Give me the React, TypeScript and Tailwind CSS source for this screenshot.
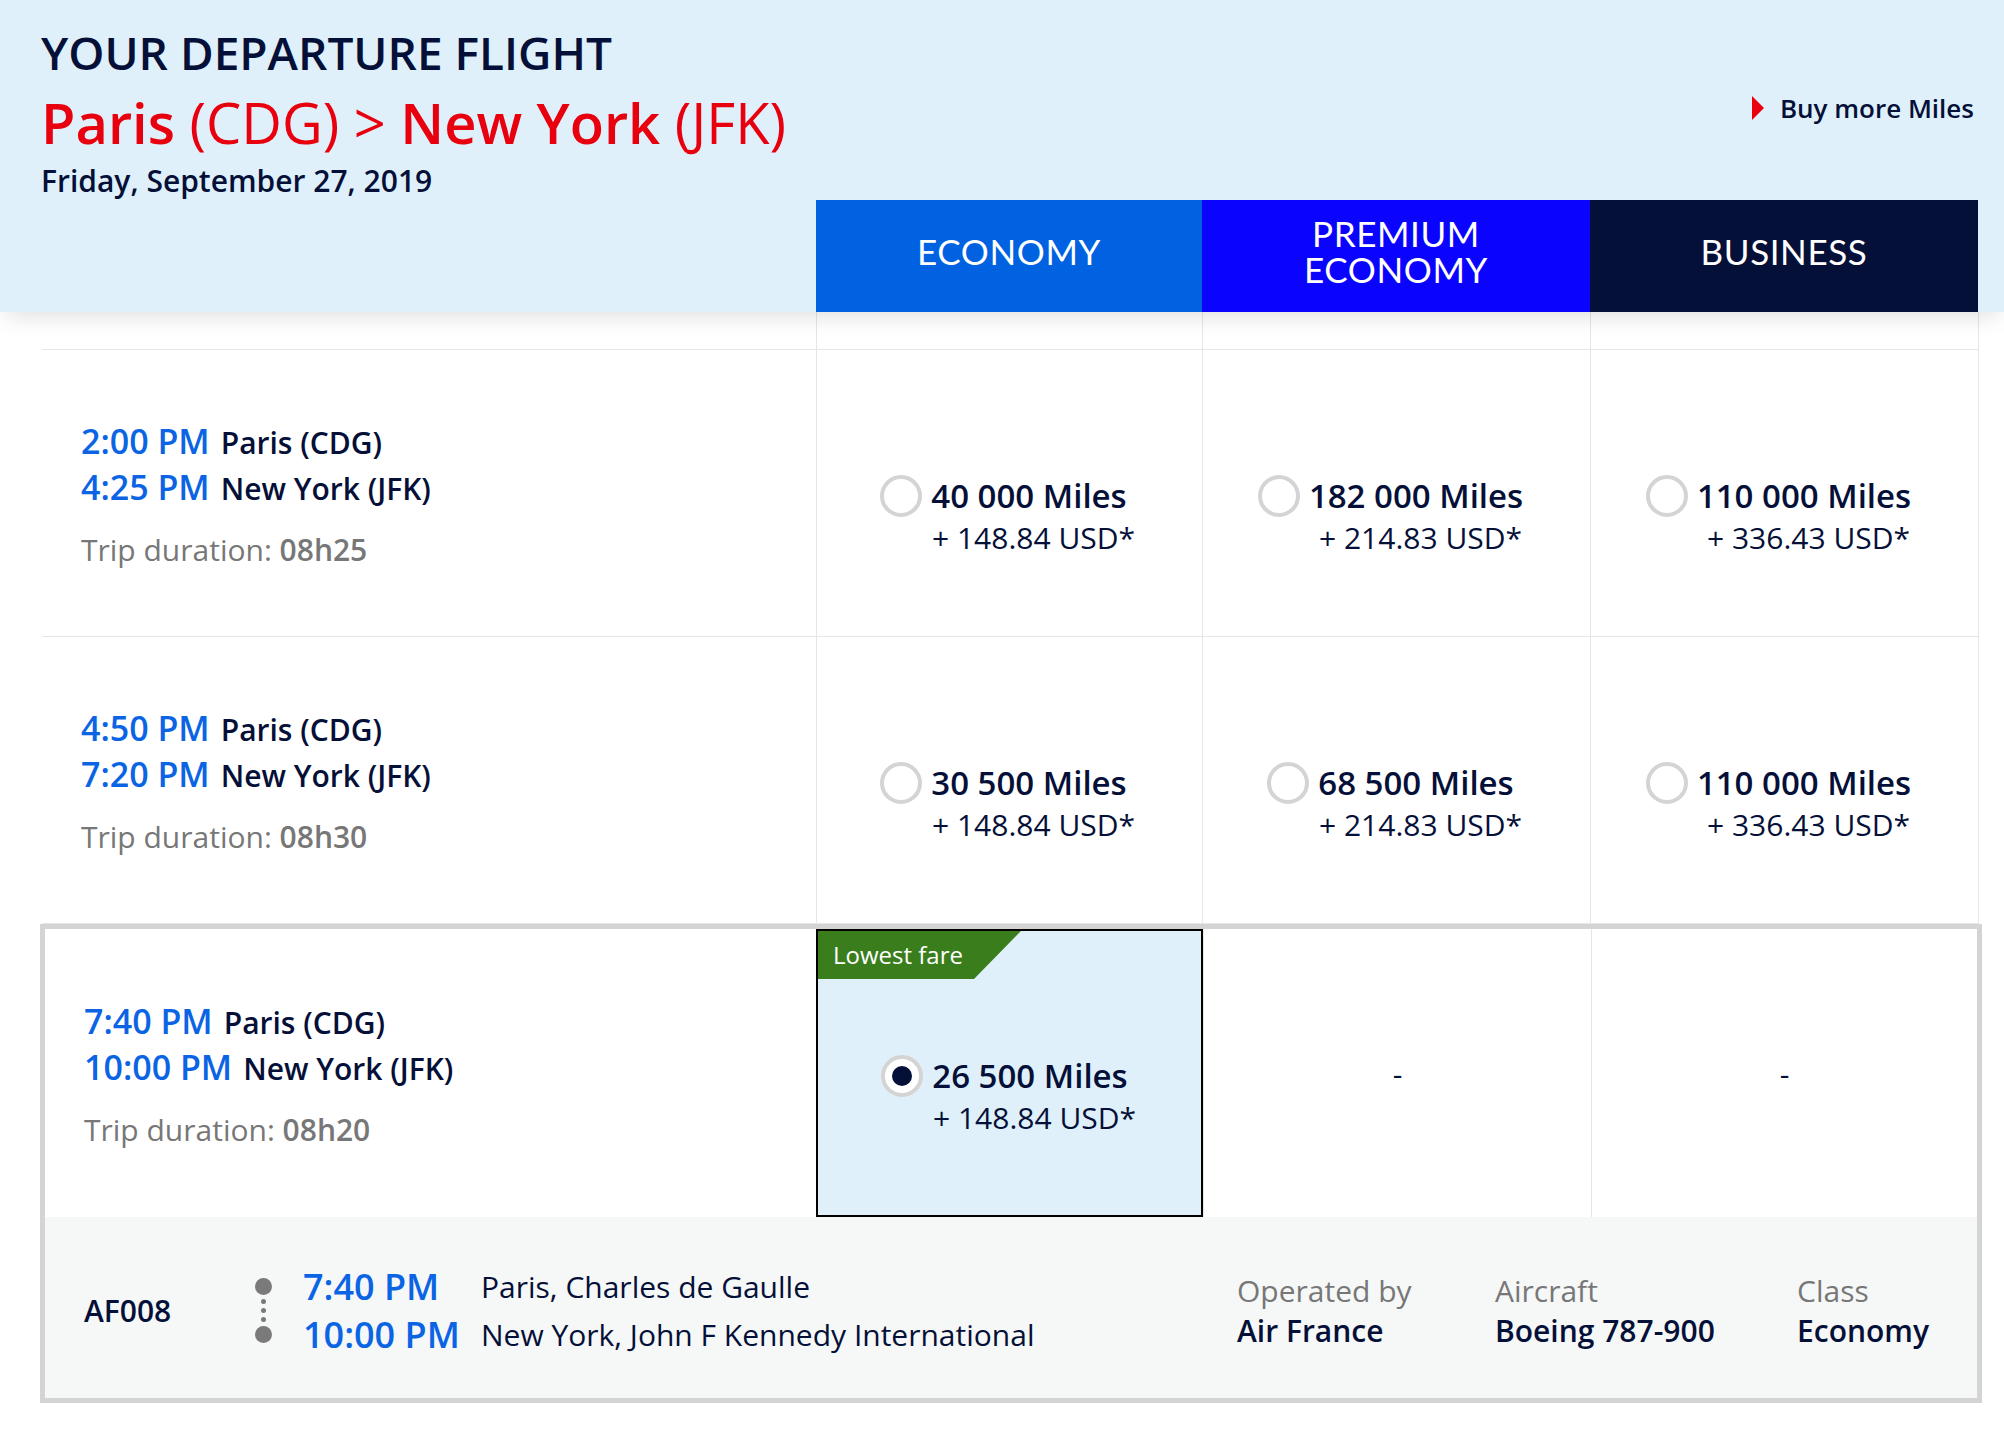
import React from "react";

type Fare = { miles: string; usd: string } | null;

interface Flight {
  dep: string;
  arr: string;
  duration: string;
  fares: Fare[];
  selected?: boolean;
}

const flights: Flight[] = [
  {
    dep: "2:00 PM",
    arr: "4:25 PM",
    duration: "08h25",
    fares: [
      { miles: "40 000 Miles", usd: "+ 148.84 USD*" },
      { miles: "182 000 Miles", usd: "+ 214.83 USD*" },
      { miles: "110 000 Miles", usd: "+ 336.43 USD*" },
    ],
  },
  {
    dep: "4:50 PM",
    arr: "7:20 PM",
    duration: "08h30",
    fares: [
      { miles: "30 500 Miles", usd: "+ 148.84 USD*" },
      { miles: "68 500 Miles", usd: "+ 214.83 USD*" },
      { miles: "110 000 Miles", usd: "+ 336.43 USD*" },
    ],
  },
  {
    dep: "7:40 PM",
    arr: "10:00 PM",
    duration: "08h20",
    fares: [{ miles: "26 500 Miles", usd: "+ 148.84 USD*" }, null, null],
    selected: true,
  },
];

function Radio({ checked }: { checked?: boolean }) {
  return (
    <span className="flex h-[42px] w-[42px] shrink-0 items-center justify-center rounded-full border-[4px] border-[#d4d4d4] bg-white">
      {checked && <span className="h-[20px] w-[20px] rounded-full bg-[#051038]" />}
    </span>
  );
}

function FlightInfo({ f }: { f: Flight }) {
  return (
    <div className="flex items-center pl-[39px] pt-[2px]">
      <div>
        <div className="flex items-baseline leading-[46px]">
          <span className="text-[34px] font-semibold text-[#0a64e4]">{f.dep}</span>
          <span className="ml-[11px] text-[30px] font-semibold leading-[40px]">Paris (CDG)</span>
        </div>
        <div className="flex items-baseline leading-[46px]">
          <span className="text-[34px] font-semibold text-[#0a64e4]">{f.arr}</span>
          <span className="ml-[11px] text-[30px] font-semibold leading-[40px]">New York (JFK)</span>
        </div>
        <div className="mt-[20px] text-[30px] leading-[40px] text-[#777777]">
          Trip duration: <span className="font-semibold">{f.duration}</span>
        </div>
      </div>
    </div>
  );
}

function PriceCell({ fare, selected, className }: { fare: Fare; selected?: boolean; className: string }) {
  if (!fare) {
    return (
      <div className={`flex items-center justify-center border-l border-[#e6e6e6] text-[30px] ${className}`}>-</div>
    );
  }
  return (
    <div
      className={`flex flex-col ${className} ${
        selected ? "border-[2px] border-black bg-[#dff0fa]" : "border-l border-[#e6e6e6]"
      }`}
    >
      <div className="h-[48px] shrink-0">
        {selected && (
          <div className="flex h-[48px] w-[203px] items-center bg-[#3a7d1c] pl-[15px] text-[24px] text-white [clip-path:polygon(0_0,100%_0,calc(100%-47px)_100%,0_100%)]">
            Lowest fare
          </div>
        )}
      </div>
      <div
        className={`flex flex-1 flex-col items-center justify-center pb-[4px] ${
          selected ? "pr-[10px]" : "pr-[12px]"
        }`}
      >
        <div className="flex items-center gap-[9px]">
          <Radio checked={selected} />
          <span className="text-[33px] font-semibold leading-[42px]">{fare.miles}</span>
        </div>
        <div className="mt-[3px] pl-[60px] text-[30px] leading-[36px]">{fare.usd}</div>
      </div>
    </div>
  );
}

export default function App() {
  return (
    <div className="min-h-[1432px] bg-white font-['Open_Sans',sans-serif] text-[#051038]">
      <header className="relative z-10 flex h-[312px] bg-[#dff0fa] pl-[41px] pr-[26px] shadow-[0_10px_22px_-6px_rgba(0,0,0,0.13)]">
        <div className="w-[775px] pt-[25px]">
          <h1 className="text-[46px] font-semibold leading-[54px]">YOUR DEPARTURE FLIGHT</h1>
          <div className="mt-[8px] text-[56px] leading-[70px] text-[#e8000e]">
            <span className="font-semibold">Paris</span> (CDG) &gt; <span className="font-semibold">New York</span> (JFK)
          </div>
          <div className="mt-[6px] text-[30px] font-semibold leading-[36px]">Friday, September 27, 2019</div>
        </div>
        <div className="flex flex-1 flex-col">
          <div className="flex h-[200px] shrink-0 items-start justify-end pr-[4px] pt-[92px]">
            <a href="#" className="flex items-center gap-[16px] text-[26px] font-semibold leading-[32px]">
              <svg width="12" height="24" viewBox="0 0 12 24">
                <path d="M0 0L12 12L0 24Z" fill="#e8000e" />
              </svg>
              Buy more Miles
            </a>
          </div>
          <div className="flex flex-1 font-['Lato',sans-serif] text-[35px] tracking-[0.6px] text-white">
            <div className="flex w-[386px] items-center justify-center bg-[#0062e1] pb-[10px]">ECONOMY</div>
            <div className="flex w-[388px] flex-col items-center justify-center bg-[#0a04ff] pb-[10px] text-center">
              <div className="h-[36px] leading-[36px]">PREMIUM</div>
              <div className="h-[36px] leading-[36px]">ECONOMY</div>
            </div>
            <div className="flex flex-1 items-center justify-center bg-[#051038] pb-[10px]">BUSINESS</div>
          </div>
        </div>
      </header>

      <main className="ml-[42px] w-[1937px]">
        <div className="flex h-[38px] border-b border-[#e6e6e6]">
          <div className="w-[774px]" />
          <div className="w-[386px] border-l border-[#e6e6e6]" />
          <div className="w-[388px] border-l border-[#e6e6e6]" />
          <div className="flex-1 border-x border-[#e6e6e6]" />
        </div>

        {flights
          .filter((f) => !f.selected)
          .map((f) => (
            <div key={f.dep} className="flex h-[287px] border-b border-[#e6e6e6]">
              <div className="flex w-[774px]">
                <FlightInfo f={f} />
              </div>
              <PriceCell fare={f.fares[0]} className="w-[386px]" />
              <PriceCell fare={f.fares[1]} className="w-[388px]" />
              <PriceCell fare={f.fares[2]} className="flex-1 border-r" />
            </div>
          ))}

        {flights
          .filter((f) => f.selected)
          .map((f) => (
            <div key={f.dep} className="-ml-[2px] w-[1942px] border-[5px] border-[#d4d4d4]">
              <div className="flex h-[288px]">
                <div className="flex w-[771px]">
                  <FlightInfo f={f} />
                </div>
                <PriceCell fare={f.fares[0]} selected className="w-[387px]" />
                <PriceCell fare={f.fares[1]} className="w-[388px]" />
                <PriceCell fare={f.fares[2]} className="flex-1" />
              </div>
              <div className="flex h-[181px] items-center bg-[#f6f7f7] pl-[39px] pt-[6px]">
                <div className="flex w-[1153px] items-center">
                  <div className="w-[170px] text-[30px] font-semibold">AF008</div>
                  <div className="flex w-[18px] flex-col items-center gap-[4px]">
                    <span className="h-[17px] w-[17px] rounded-full bg-[#7a7a7a]" />
                    <span className="h-[5px] w-[5px] rounded-full bg-[#7a7a7a]" />
                    <span className="h-[5px] w-[5px] rounded-full bg-[#7a7a7a]" />
                    <span className="h-[5px] w-[5px] rounded-full bg-[#7a7a7a]" />
                    <span className="h-[17px] w-[17px] rounded-full bg-[#7a7a7a]" />
                  </div>
                  <div className="ml-[31px] w-[178px] text-[36px] font-semibold leading-[48px] text-[#0a64e4]">
                    <div>7:40 PM</div>
                    <div>10:00 PM</div>
                  </div>
                  <div className="text-[30px] leading-[48px]">
                    <div>Paris, Charles de Gaulle</div>
                    <div>New York, John F Kennedy International</div>
                  </div>
                </div>
                <div className="flex text-[30px] leading-[40px]">
                  <div className="w-[258px]">
                    <div className="text-[#777777]">Operated by</div>
                    <div className="font-semibold">Air France</div>
                  </div>
                  <div className="w-[302px]">
                    <div className="text-[#777777]">Aircraft</div>
                    <div className="font-semibold">Boeing 787-900</div>
                  </div>
                  <div>
                    <div className="text-[#777777]">Class</div>
                    <div className="font-semibold">Economy</div>
                  </div>
                </div>
              </div>
            </div>
          ))}
      </main>
    </div>
  );
}
